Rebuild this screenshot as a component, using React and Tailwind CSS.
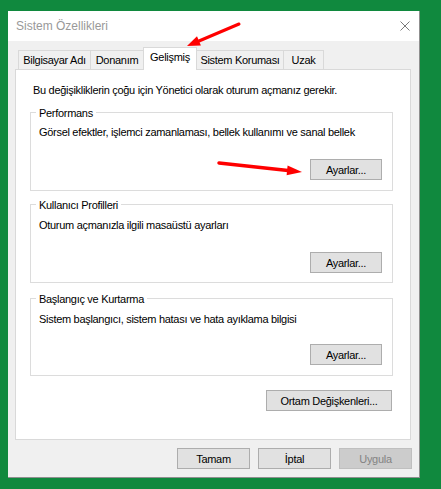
import React from "react";

const body = "text-[11px] tracking-[-0.3px] leading-[14px]";

function Btn({ children, className = "", disabled = false }) {
  return (
    <div
      className={
        "flex items-center justify-center h-[21px] border text-[11px] tracking-[-0.3px] leading-[14px] " +
        (disabled
          ? "bg-[#cccccc] border-[#bfbfbf] text-[#838383] "
          : "bg-[#e1e1e1] border-[#adadad] text-black ") +
        className
      }
    >
      {children}
    </div>
  );
}

function Group({ title, desc, mt, descMt, btnMt, pb }) {
  return (
    <fieldset
      className={"border border-[#dcdcdc] pl-[5px] pr-[10px] flex flex-col " + mt + " " + pb}
    >
      <legend className="px-[3px] pt-[1px] text-[11px] tracking-[-0.3px] leading-[14px] text-black">{title}</legend>
      <div className={"pl-[3px] text-[11px] tracking-[-0.3px] leading-[14px] text-black " + descMt}>{desc}</div>
      <div className={"flex justify-end " + btnMt}>
        <Btn className="w-[72px]">Ayarlar...</Btn>
      </div>
    </fieldset>
  );
}

function Tab({ label, className = "" }) {
  return (
    <div
      className={
        "h-[19px] border border-b-0 border-[#d9d9d9] bg-[#f0f0f0] flex justify-center pt-[2px] text-[11px] tracking-[-0.3px] leading-[14px] text-black whitespace-nowrap " +
        className
      }
    >
      {label}
    </div>
  );
}

export default function App() {
  return (
    <div className="relative w-[441px] h-[489px] bg-[#10893e] pt-[11px] pl-[8px] font-['Liberation_Sans',Arial,sans-serif]">
      <div className="w-[412px] bg-[#f0f0f0] border-r border-b border-[#8f8f8f] flex flex-col pb-[8px]">
        {/* Title bar */}
        <div className="h-[30px] bg-white flex items-center justify-between pl-[8px] pr-[9px]">
          <span className="text-[12px] leading-[14px] text-[#999999]">Sistem Özellikleri</span>
          <svg width="10" height="10" viewBox="0 0 10 10" className="block">
            <path d="M0.5 0.5 L9.5 9.5 M9.5 0.5 L0.5 9.5" stroke="#7a7a7a" strokeWidth="1" fill="none" />
          </svg>
        </div>

        <div className="pl-[7px] pr-[8px] mt-[6px] flex flex-col">
          {/* Tabs */}
          <div className="flex items-end pl-[3px] h-[22px]">
            <Tab label="Bilgisayar Adı" className="w-[73px]" />
            <Tab label="Donanım" className="w-[54px] -ml-px" />
            <div className="relative z-10 w-[54px] h-[23px] -ml-px -mb-px border border-b-0 border-[#d9d9d9] bg-white flex justify-center pt-[2px] text-[11px] tracking-[-0.3px] leading-[14px] text-black whitespace-nowrap">
              Gelişmiş
            </div>
            <Tab label="Sistem Koruması" className="w-[88px] -ml-px" />
            <Tab label="Uzak" className="w-[41px] -ml-px" />
          </div>

          {/* Panel */}
          <div className="bg-white border border-[#d9d9d9] flex flex-col pl-[14px] pr-[17px] pt-[13px] pb-[28px]">
            <div className={"pl-[3px] text-black " + body}>
              Bu değişikliklerin çoğu için Yönetici olarak oturum açmanız gerekir.
            </div>
            <Group
              title="Performans"
              desc="Görsel efektler, işlemci zamanlaması, bellek kullanımı ve sanal bellek"
              mt="mt-[8px]"
              descMt="mt-[5px]"
              btnMt="mt-[20px]"
              pb="pb-[10px]"
            />
            <Group
              title="Kullanıcı Profilleri"
              desc="Oturum açmanızla ilgili masaüstü ayarları"
              mt="mt-[6px]"
              descMt="mt-[6px]"
              btnMt="mt-[20px]"
              pb="pb-[9px]"
            />
            <Group
              title="Başlangıç ve Kurtarma"
              desc="Sistem başlangıcı, sistem hatası ve hata ayıklama bilgisi"
              mt="mt-[8px]"
              descMt="mt-[6px]"
              btnMt="mt-[18px]"
              pb="pb-[10px]"
            />
            <div className="flex justify-end mt-[14px] pr-[1px]">
              <Btn className="w-[126px]">Ortam Değişkenleri...</Btn>
            </div>
          </div>
        </div>

        {/* Bottom buttons */}
        <div className="flex justify-end gap-[8px] mt-[8px] pr-[7px]">
          <Btn className="w-[73px]">Tamam</Btn>
          <Btn className="w-[73px]">İptal</Btn>
          <Btn className="w-[73px]" disabled>
            Uygula
          </Btn>
        </div>
      </div>

      {/* Red annotation arrows */}
      <svg
        className="absolute left-0 top-0 pointer-events-none"
        width="441"
        height="489"
        viewBox="0 0 441 489"
      >
        <line x1="239" y1="24" x2="199" y2="41" stroke="#ff0000" strokeWidth="3" strokeLinecap="round" />
        <polygon points="187,46 197,36.3 200.9,45.5" fill="#ff0000" />
        <line x1="219" y1="163" x2="288" y2="170.5" stroke="#ff0000" strokeWidth="3.5" strokeLinecap="round" />
        <polygon points="302,172 287.6,165.6 286.6,175.2" fill="#ff0000" />
      </svg>
    </div>
  );
}
